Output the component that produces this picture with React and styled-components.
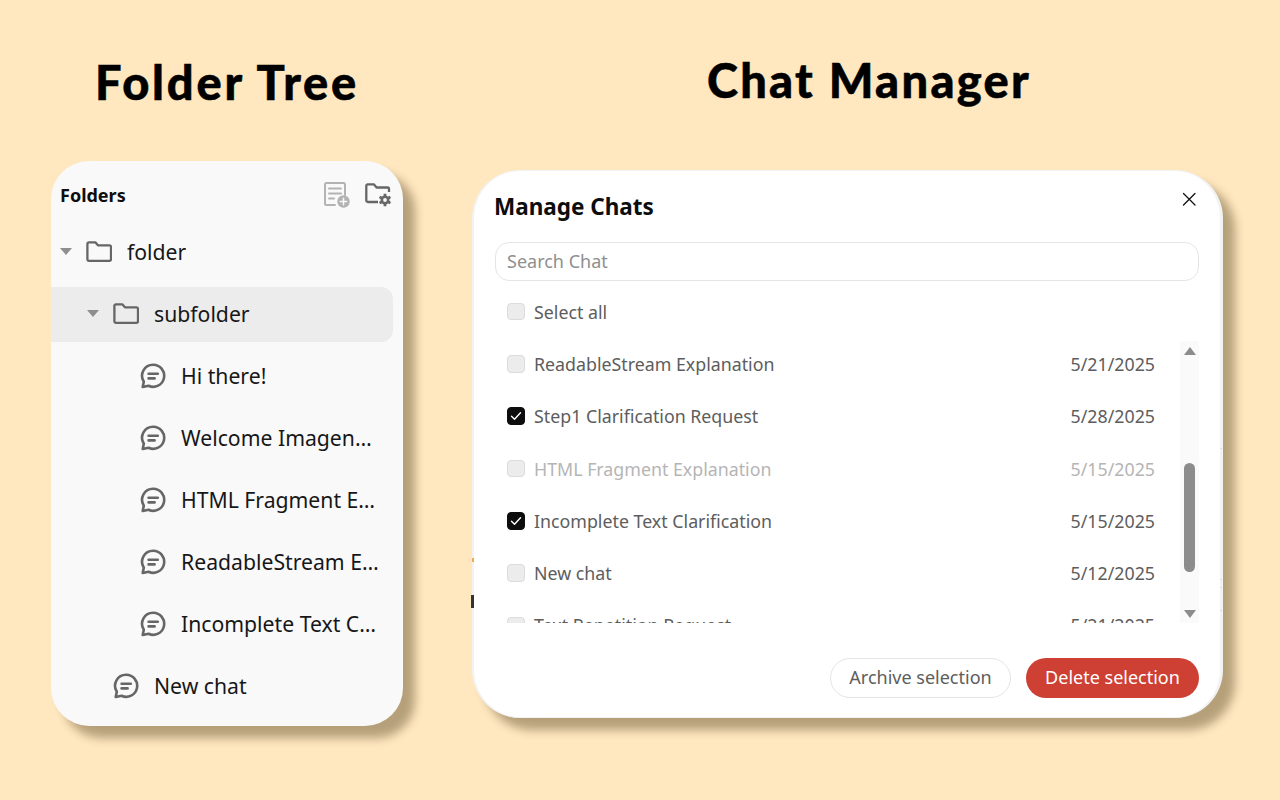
import React from "react";
import styled, { createGlobalStyle } from "styled-components";

const Global = createGlobalStyle`
  html, body { margin: 0; padding: 0; background: #ffe7bf; }
  body { font-family: "Noto Sans", "Open Sans", sans-serif; }
  * { box-sizing: border-box; }
`;

const Page = styled.main`
  width: 1280px;
  height: 800px;
  overflow: hidden;
  display: flex;
  align-items: flex-start;
  padding-left: 51px;
  gap: 69px;
`;
const TreeColumn = styled.section`
  width: 352px;
  padding-top: 53px;
`;
const ManagerColumn = styled.section`
  width: 751px;
  padding-top: 51px;
`;
const Heading = styled.h1`
  margin: 0;
  height: ${(p) => p.$h}px;
  padding-left: ${(p) => p.$offset || 0}px;
  text-align: center;
  font-family: "Lato", sans-serif;
  font-weight: 900;
  font-size: 47px;
  line-height: 58px;
  letter-spacing: ${(p) => p.$spacing}px;
  -webkit-text-stroke: 0.5px #000;
  color: #000;
`;
const TreePanel = styled.div`
  height: 565px;
  border-radius: 38px;
  background: #f9f9f9;
  box-shadow: 12px 12px 10px rgba(50, 35, 0, 0.36);
  padding: 21px 10px 0 0;
`;
const TreeHeader = styled.header`
  display: flex;
  align-items: center;
  height: 26px;
  padding-left: 9px;
  margin-bottom: 17px;
`;
const TreeTitle = styled.h2`
  margin: 0;
  flex: 1;
  font-size: 18px;
  font-weight: 700;
  color: #0d0d0d;
  line-height: 24px;
`;
const HeaderIcons = styled.div`
  display: flex;
  align-items: center;
  gap: 15px;
  padding-right: 1px;
`;
const TreeList = styled.div`
  display: flex;
  flex-direction: column;
  gap: 7px;
`;
const TreeRow = styled.div`
  display: flex;
  align-items: center;
  height: 55px;
  padding: 0 12px 2px ${(p) => p.$indent}px;
  border-radius: 0 12px 12px 0;
  background: ${(p) => (p.$active ? "#ececec" : "transparent")};
  font-size: 21.2px;
  color: #171717;
`;
const Caret = styled.span`
  flex: none;
  width: 0;
  height: 0;
  margin-right: 14px;
  border-left: 6px solid transparent;
  border-right: 6px solid transparent;
  border-top: 7px solid #8e8e8e;
`;
const RowIcon = styled.span`
  flex: none;
  display: flex;
  margin-right: ${(p) => p.$gap}px;
`;
const RowLabel = styled.span`
  min-width: 0;
  white-space: nowrap;
  overflow: hidden;
  text-overflow: ellipsis;
`;

const Modal = styled.div`
  position: relative;
  height: 548px;
  border-radius: 48px;
  border: solid #f2f2f2;
  border-width: 1px 3px 1px 2px;
  background: #fff;
  box-shadow: 12px 12px 10px rgba(50, 35, 0, 0.36);
  padding: 0 21px;
  display: flex;
  flex-direction: column;
`;
const Fleck = styled.span`
  position: absolute;
  left: ${(p) => p.$x}px;
  top: ${(p) => p.$y}px;
  width: ${(p) => p.$w}px;
  height: ${(p) => p.$h}px;
  background: ${(p) => p.$c};
`;
const ModalHeader = styled.header`
  display: flex;
  justify-content: space-between;
  height: 71px;
  padding-top: 19px;
`;
const ModalTitle = styled.h2`
  margin: 0 0 0 -1px;
  font-size: 22.5px;
  line-height: 33px;
  font-weight: 700;
  color: #0d0d0d;
`;
const CloseButton = styled.span`
  display: flex;
  margin: 0 1px 0 0;
  height: 18px;
`;
const SearchBox = styled.div`
  flex: none;
  height: 39px;
  margin-bottom: 5px;
  border: 1px solid #e5e5e5;
  border-radius: 14px;
  padding: 0 0 2px 11px;
  display: flex;
  align-items: center;
  font-size: 18px;
  color: #8f8f8f;
`;
const ListRow = styled.div`
  flex: none;
  display: flex;
  align-items: center;
  height: 52.3px;
  padding: 0 25px 1px 12px;
  font-size: 17.8px;
  color: ${(p) => (p.$dim ? "#b5b5b5" : "#5d5d5d")};
`;
const Box = styled.span`
  flex: none;
  width: 17.5px;
  height: 17.5px;
  margin-right: 9.5px;
  border-radius: 4px;
  display: flex;
  align-items: center;
  justify-content: center;
  background: ${(p) => (p.$on ? "#0d0d0d" : "#ececec")};
  border: 1px solid ${(p) => (p.$on ? "#0d0d0d" : "#dcdcdc")};
`;
const RowName = styled.span`
  flex: 1;
`;
const ListArea = styled.div`
  flex: none;
  display: flex;
  height: 285px;
`;
const Rows = styled.div`
  flex: 1;
  overflow: hidden;
`;
const Track = styled.div`
  flex: none;
  width: 19px;
  height: 282px;
  margin-top: 3px;
  background: #fafafa;
  display: flex;
  flex-direction: column;
  align-items: center;
`;
const Arrow = styled.span`
  flex: none;
  width: 0;
  height: 0;
  margin-top: ${(p) => p.$top}px;
  border-left: 6px solid transparent;
  border-right: 6px solid transparent;
  ${(p) => (p.$up ? "border-bottom: 8px solid #8c8c8c;" : "border-top: 8px solid #8c8c8c;")}
`;
const Thumb = styled.span`
  flex: none;
  width: 11px;
  height: 109px;
  margin-top: 108px;
  border-radius: 6px;
  background: #8c8c8c;
`;
const Footer = styled.footer`
  display: flex;
  justify-content: flex-end;
  gap: 15px;
  margin-top: 35px;
`;
const Button = styled.span`
  height: 40px;
  border-radius: 20px;
  padding-bottom: 2px;
  display: flex;
  align-items: center;
  justify-content: center;
  width: ${(p) => p.$w}px;
  font-size: 18px;
  color: ${(p) => (p.$danger ? "#fff" : "#5d5d5d")};
  background: ${(p) => (p.$danger ? "#ce4034" : "#fff")};
  border: ${(p) => (p.$danger ? "none" : "1px solid #e5e5e5")};
`;

const ChatIcon = () => (
  <svg width="26" height="26" viewBox="0 0 26 26" fill="none" stroke="#666" strokeWidth="2.6" strokeLinecap="round" strokeLinejoin="round">
    <path d="M13.2 1.8a11 11 0 1 1-4.6 21l-5.900 1.200 1.100-5.300A11 11 0 0 1 13.200 1.800Z" />
    <path d="M8.600 10.800h9.200M8.600 15.400h6" />
  </svg>
);
const FolderIcon = () => (
  <svg width="26" height="21" viewBox="0 0 26 21" fill="none" stroke="#666" strokeWidth="2.3" strokeLinejoin="round">
    <path d="M1.400 2.800a1.500 1.500 0 0 1 1.500-1.500h6.400l2.600 3h11.600a1.500 1.500 0 0 1 1.500 1.500v12.500a1.500 1.500 0 0 1-1.500 1.500H2.900a1.500 1.500 0 0 1-1.500-1.500Z" />
  </svg>
);
const NewChatIcon = () => (
  <svg width="26" height="26" viewBox="0 0 26 26" fill="none" stroke="#b3b3b3" strokeWidth="2" strokeLinecap="round">
    <path d="M11 23H2.500A1.500 1.500 0 0 1 1 21.500v-19A1.500 1.500 0 0 1 2.500 1h17A1.500 1.500 0 0 1 21 2.500V13" />
    <path d="M5 6.500h12M5 11.500h12M5 16.500h5" />
    <circle cx="19.500" cy="19.500" r="6.200" fill="#b3b3b3" stroke="none" />
    <path d="M19.500 16.300v6.400M16.300 19.500h6.400" stroke="#f9f9f9" strokeWidth="1.500" />
  </svg>
);
const FolderGearIcon = () => (
  <svg width="27" height="24" viewBox="0 0 27 24" fill="none" stroke="#666" strokeWidth="2.300" strokeLinejoin="round">
    <path d="M13 19H2.800A1.500 1.500 0 0 1 1.300 17.500V2.800A1.500 1.500 0 0 1 2.800 1.300h6l2.800 3.200h10.900a1.500 1.500 0 0 1 1.500 1.500v3" />
    <circle cx="20" cy="17" r="3.200" strokeWidth="2.600" />
    <path d="M20 10.800v2.200M20 21v2.200M14.600 13.900l1.900 1.100M23.500 19l1.900 1.100M14.600 20.100l1.900-1.100M23.500 15l1.900-1.100" strokeWidth="2.800" />
  </svg>
);
const CloseIcon = () => (
  <svg width="18" height="18" viewBox="0 0 18 18" stroke="#111" strokeWidth="1.300" strokeLinecap="round">
    <path d="M3.500 3.500l11.500 11.500M15 3.500L3.500 15" />
  </svg>
);
const CheckMark = () => (
  <svg width="12" height="10" viewBox="0 0 12 10" fill="none" stroke="#fff" strokeWidth="1.400" strokeLinecap="round" strokeLinejoin="round">
    <path d="M1.500 5.200l3 3 6-6.500" />
  </svg>
);

const chatRows = [
  ["ReadableStream Explanation", "5/21/2025"],
  ["Step1 Clarification Request", "5/28/2025", true],
  ["HTML Fragment Explanation", "5/15/2025", false, true],
  ["Incomplete Text Clarification", "5/15/2025", true],
  ["New chat", "5/12/2025"],
  ["Text Repetition Request", "5/21/2025"],
];
const nested = ["Hi there!", "Welcome Imagen4 Fast Preview", "HTML Fragment Explanation", "ReadableStream Explanation", "Incomplete Text Clarification"];

export default function App() {
  return (
    <Page>
      <Global />
      <TreeColumn>
        <Heading $h={108} $spacing={2.8}>Folder Tree</Heading>
        <TreePanel>
          <TreeHeader>
            <TreeTitle>Folders</TreeTitle>
            <HeaderIcons>
              <NewChatIcon />
              <FolderGearIcon />
            </HeaderIcons>
          </TreeHeader>
          <TreeList>
            <TreeRow $indent={9}>
              <Caret />
              <RowIcon $gap={15}><FolderIcon /></RowIcon>
              <RowLabel>folder</RowLabel>
            </TreeRow>
            <TreeRow $indent={36} $active>
              <Caret />
              <RowIcon $gap={15}><FolderIcon /></RowIcon>
              <RowLabel>subfolder</RowLabel>
            </TreeRow>
            {nested.map((n) => (
              <TreeRow key={n} $indent={89}>
                <RowIcon $gap={15}><ChatIcon /></RowIcon>
                <RowLabel>{n}</RowLabel>
              </TreeRow>
            ))}
            <TreeRow $indent={62}>
              <RowIcon $gap={15}><ChatIcon /></RowIcon>
              <RowLabel>New chat</RowLabel>
            </TreeRow>
          </TreeList>
        </TreePanel>
      </TreeColumn>
      <ManagerColumn>
        <Heading $h={119} $offset={43} $spacing={2.3}>Chat Manager</Heading>
        <Modal>
          <Fleck $x={-2} $y={387} $w={2} $h={4} $c="#f2a85c" />
          <Fleck $x={-3} $y={424} $w={3} $h={13} $c="#333" />
          <Fleck $x={746} $y={277} $w={2} $h={1} $c="#dcdcdc" />
          <Fleck $x={746} $y={408} $w={2} $h={1} $c="#dcdcdc" />
          <Fleck $x={746} $y={416} $w={2} $h={1} $c="#dcdcdc" />
          <Fleck $x={746} $y={439} $w={2} $h={1} $c="#dcdcdc" />
          <ModalHeader>
            <ModalTitle>Manage Chats</ModalTitle>
            <CloseButton><CloseIcon /></CloseButton>
          </ModalHeader>
          <SearchBox>Search Chat</SearchBox>
          <ListRow>
            <Box />
            <RowName>Select all</RowName>
          </ListRow>
          <ListArea>
            <Rows>
              {chatRows.map(([name, date, on, dim]) => (
                <ListRow key={name} $dim={dim}>
                  <Box $on={on}>{on && <CheckMark />}</Box>
                  <RowName>{name}</RowName>
                  <span>{date}</span>
                </ListRow>
              ))}
            </Rows>
            <Track>
              <Arrow $up $top={6} />
              <Thumb />
              <Arrow $top={38} />
            </Track>
          </ListArea>
          <Footer>
            <Button $w={181}>Archive selection</Button>
            <Button $w={173} $danger>Delete selection</Button>
          </Footer>
        </Modal>
      </ManagerColumn>
    </Page>
  );
}
